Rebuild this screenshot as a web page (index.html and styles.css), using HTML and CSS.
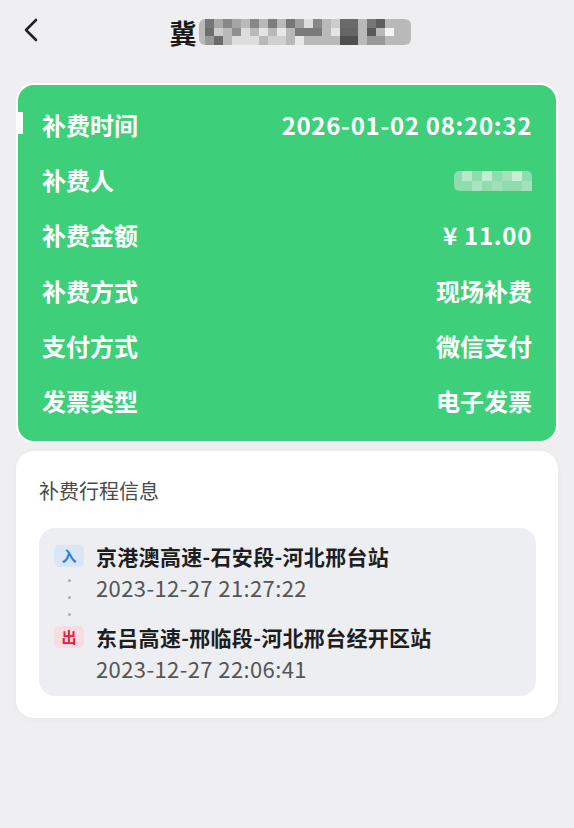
FILE: index.html
```html
<!DOCTYPE html>
<html lang="zh-CN">
<head>
    <meta charset="UTF-8">
    <meta name="viewport" content="width=device-width, initial-scale=1.0">
    <title>补费详情</title>
    <link rel="stylesheet" href="styles.css">
</head>
<body>
    <div class="header">
        <svg class="back" width="24" height="30" viewBox="0 0 24 30">
            <path d="M16 5 L6 15 L16 25" fill="none" stroke="#222" stroke-width="2.6" stroke-linecap="round" stroke-linejoin="round"/>
        </svg>
        <div class="title">
            <span>冀</span>
            <svg class="mosaic" width="212" height="26" viewBox="0 0 212 26">
                <rect x="0" y="0" width="212" height="26" rx="6" fill="#b9b9b9"/>
                <rect x="6" y="0" width="9" height="9" fill="#777"/>
                <rect x="15" y="0" width="9" height="9" fill="#aaa"/>
                <rect x="24" y="0" width="9" height="9" fill="#888"/>
                <rect x="33" y="0" width="9" height="9" fill="#a5a5a5"/>
                <rect x="51" y="0" width="9" height="9" fill="#888"/>
                <rect x="69" y="0" width="9" height="9" fill="#7d7d7d"/>
                <rect x="87" y="0" width="9" height="9" fill="#777"/>
                <rect x="96" y="0" width="9" height="9" fill="#a0a0a0"/>
                <rect x="105" y="0" width="9" height="9" fill="#ddd"/>
                <rect x="114" y="0" width="9" height="9" fill="#888"/>
                <rect x="132" y="0" width="9" height="9" fill="#ccc"/>
                <rect x="141" y="0" width="18" height="9" fill="#6a6a6a"/>
                <rect x="168" y="0" width="9" height="9" fill="#777"/>
                <rect x="177" y="0" width="9" height="9" fill="#5e5e5e"/>
                <rect x="6" y="9" width="9" height="8" fill="#6d6d6d"/>
                <rect x="15" y="9" width="9" height="8" fill="#ccc"/>
                <rect x="33" y="9" width="9" height="8" fill="#8f8f8f"/>
                <rect x="42" y="9" width="9" height="8" fill="#ddd"/>
                <rect x="60" y="9" width="9" height="8" fill="#e5e5e5"/>
                <rect x="78" y="9" width="9" height="8" fill="#e8e8e8"/>
                <rect x="96" y="9" width="27" height="8" fill="#7a7a7a"/>
                <rect x="132" y="9" width="9" height="8" fill="#e5e5e5"/>
                <rect x="141" y="9" width="18" height="8" fill="#666"/>
                <rect x="168" y="9" width="9" height="8" fill="#5a5a5a"/>
                <rect x="186" y="9" width="9" height="8" fill="#f4f4f4"/>
                <rect x="6" y="17" width="9" height="9" fill="#999"/>
                <rect x="15" y="17" width="9" height="9" fill="#6b6b6b"/>
                <rect x="33" y="17" width="27" height="9" fill="#ddd"/>
                <rect x="69" y="17" width="18" height="9" fill="#d0d0d0"/>
                <rect x="96" y="17" width="9" height="9" fill="#e8e8e8"/>
                <rect x="141" y="17" width="18" height="9" fill="#4f4f4f"/>
                <rect x="168" y="17" width="18" height="9" fill="#999"/>
            </svg>
        </div>
    </div>

    <div class="fee-card">
        <span class="marker"></span>
        <div class="fee-row">
            <span class="fee-label">补费时间</span>
            <span class="fee-value num">2026-01-02 08:20:32</span>
        </div>
        <div class="fee-row">
            <span class="fee-label">补费人</span>
            <svg class="fee-value" width="78" height="24" viewBox="0 0 78 24">
                <rect x="0" y="3" width="78" height="20" rx="5" fill="#8fdcae"/>
                <rect x="8" y="3" width="10" height="10" fill="#b6e9c9"/>
                <rect x="28" y="3" width="10" height="10" fill="#c3edd3"/>
                <rect x="48" y="3" width="10" height="10" fill="#a4e2bc"/>
                <rect x="58" y="3" width="10" height="10" fill="#c8eed7"/>
                <rect x="18" y="13" width="10" height="10" fill="#a8e4bf"/>
                <rect x="38" y="13" width="10" height="10" fill="#9fe0b8"/>
                <rect x="68" y="13" width="10" height="10" fill="#a2e1ba"/>
            </svg>
        </div>
        <div class="fee-row">
            <span class="fee-label">补费金额</span>
            <span class="fee-value num">¥ 11.00</span>
        </div>
        <div class="fee-row">
            <span class="fee-label">补费方式</span>
            <span class="fee-value">现场补费</span>
        </div>
        <div class="fee-row">
            <span class="fee-label">支付方式</span>
            <span class="fee-value">微信支付</span>
        </div>
        <div class="fee-row">
            <span class="fee-label">发票类型</span>
            <span class="fee-value">电子发票</span>
        </div>
    </div>

    <div class="trip-card">
        <h3>补费行程信息</h3>
        <div class="trip-box">
            <div class="stop">
                <div class="stop-side">
                    <span class="tag tag-in">入</span>
                    <span class="dots"><i></i><i></i><i></i></span>
                </div>
                <div class="stop-info">
                    <div class="stop-name">京港澳高速-石安段-河北邢台站</div>
                    <div class="stop-time">2023-12-27 21:27:22</div>
                </div>
            </div>
            <div class="stop">
                <div class="stop-side">
                    <span class="tag tag-out">出</span>
                </div>
                <div class="stop-info">
                    <div class="stop-name">东吕高速-邢临段-河北邢台经开区站</div>
                    <div class="stop-time">2023-12-27 22:06:41</div>
                </div>
            </div>
        </div>
    </div>
</body>
</html>
```

FILE: styles.css
```css
* {
    box-sizing: border-box;
    margin: 0;
    padding: 0;
    font-family: "Noto Sans CJK SC", "Noto Sans", sans-serif;
}

body {
    background-color: #efeff1;
    width: 574px;
    min-height: 828px;
    padding: 0 16px;
}

.header {
    height: 68px;
    display: flex;
    align-items: center;
    position: relative;
    justify-content: center;
}

.back {
    position: absolute;
    left: 4px;
    top: 15px;
}

.title {
    display: flex;
    align-items: center;
    gap: 2px;
    margin-left: 6px;
    margin-top: -4px;
    font-size: 27px;
    font-weight: 700;
    color: #1a1a1a;
}

.fee-card {
    position: relative;
    background-color: #3ecf7b;
    border: 2px solid #fff;
    border-radius: 18px;
    padding: 12px 24px 13px 24px;
    margin-top: 15px;
}

.marker {
    position: absolute;
    left: 0;
    top: 27px;
    width: 5px;
    height: 22px;
    background-color: #fff;
}

.fee-row {
    height: 55.2px;
    display: flex;
    align-items: center;
    justify-content: space-between;
    color: #fff;
    font-size: 24px;
    font-weight: 700;
}

.fee-value.num {
    letter-spacing: 0.7px;
}

.trip-card {
    background-color: #fff;
    border-radius: 18px;
    margin-top: 8px;
    padding: 26px 22px 22px 23px;
    box-shadow: 0 1px 6px rgba(0, 0, 0, 0.04);
}

.trip-card h3 {
    font-size: 20px;
    font-weight: 400;
    color: #4a4a4a;
    line-height: 28px;
    margin-bottom: 23px;
}

.trip-box {
    background-color: #eceef2;
    border-radius: 16px;
    padding: 13px 15px 12px 15px;
    display: flex;
    flex-direction: column;
    gap: 6px;
}

.stop {
    display: flex;
    gap: 12px;
}

.stop-side {
    width: 30px;
    display: flex;
    flex-direction: column;
    align-items: center;
    padding-top: 4px;
}

.tag {
    width: 30px;
    height: 22px;
    border-radius: 5px;
    font-size: 15px;
    font-weight: 600;
    line-height: 22px;
    text-align: center;
}

.tag-in {
    background-color: #d9e6f7;
    color: #2d7be0;
}

.tag-out {
    background-color: #f7dde1;
    color: #e0233a;
}

.dots {
    display: flex;
    flex-direction: column;
    align-items: center;
    gap: 14px;
    margin-top: 12px;
}

.dots i {
    width: 3px;
    height: 3px;
    border-radius: 50%;
    background-color: #a9abb0;
}

.stop-name {
    font-size: 21px;
    font-weight: 700;
    color: #1e1e1e;
    line-height: 30px;
    letter-spacing: 0.3px;
}

.stop-time {
    font-size: 22px;
    color: #555;
    line-height: 32px;
    letter-spacing: 0.4px;
}
```
